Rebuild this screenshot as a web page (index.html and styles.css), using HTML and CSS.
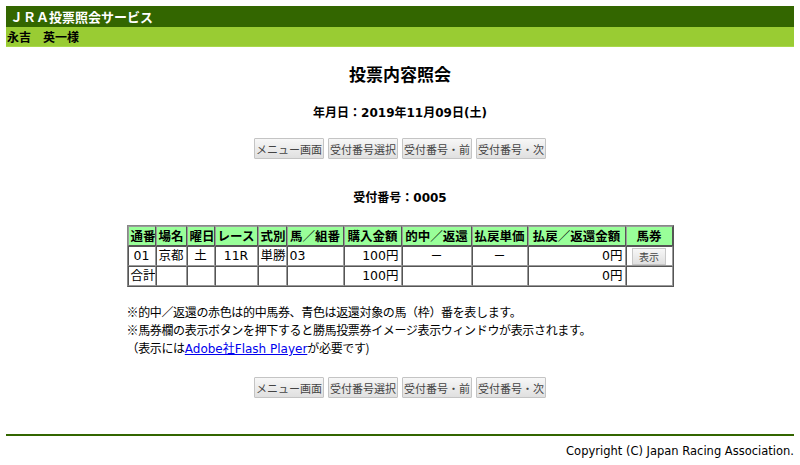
FILE: index.html
```html
<!DOCTYPE html>
<html lang="ja">
<head>
<meta charset="utf-8">
<title>投票内容照会</title>
<link rel="stylesheet" href="styles.css">
</head>
<body>
<div class="site-title">ＪＲＡ投票照会サービス</div>
<div class="user-bar">永吉　英一様</div>

<div class="main">
  <h1 class="page-title">投票内容照会</h1>
  <p class="date">年月日：2019年11月09日(土)</p>

  <div class="btn-row">
    <button class="btn">メニュー画面</button>
    <button class="btn">受付番号選択</button>
    <button class="btn">受付番号・前</button>
    <button class="btn">受付番号・次</button>
  </div>

  <p class="receipt">受付番号：0005</p>

  <div class="content">
    <table class="result">
      <thead>
        <tr>
          <th class="c1">通番</th>
          <th class="c2">場名</th>
          <th class="c3">曜日</th>
          <th class="c4">レース</th>
          <th class="c5">式別</th>
          <th class="c6">馬／組番</th>
          <th class="c7">購入金額</th>
          <th class="c8">的中／返還</th>
          <th class="c9">払戻単価</th>
          <th class="c10">払戻／返還金額</th>
          <th class="c11">馬券</th>
        </tr>
      </thead>
      <tbody>
        <tr>
          <td class="center">01</td>
          <td>京都</td>
          <td class="center">土</td>
          <td class="center">11R</td>
          <td>単勝</td>
          <td>03</td>
          <td class="right">100円</td>
          <td class="center">－</td>
          <td class="center">－</td>
          <td class="right">0円</td>
          <td class="center"><button class="btn-small">表示</button></td>
        </tr>
        <tr>
          <td>合計</td>
          <td></td>
          <td></td>
          <td></td>
          <td></td>
          <td></td>
          <td class="right">100円</td>
          <td></td>
          <td></td>
          <td class="right">0円</td>
          <td></td>
        </tr>
      </tbody>
    </table>

    <div class="notes">
      <p>※的中／返還の赤色は的中馬券、青色は返還対象の馬（枠）番を表します。</p>
      <p>※馬券欄の表示ボタンを押下すると勝馬投票券イメージ表示ウィンドウが表示されます。</p>
      <p>（表示には<a class="link" href="#">Adobe社Flash Player</a>が必要です)</p>
    </div>
  </div>

  <div class="btn-row bottom">
    <button class="btn">メニュー画面</button>
    <button class="btn">受付番号選択</button>
    <button class="btn">受付番号・前</button>
    <button class="btn">受付番号・次</button>
  </div>
</div>

<footer class="footer">Copyright (C) Japan Racing Association.</footer>
</body>
</html>
```

FILE: styles.css
```css
html, body {
  background: #ffffff;
}
body {
  margin: 6px;
  font-family: "DejaVu Sans", "Noto Sans CJK JP", sans-serif;
  font-size: 12px;
  color: #000000;
}
.site-title {
  background: #336600;
  color: #ffffff;
  font-family: "Noto Sans CJK JP", sans-serif;
  font-weight: bold;
  font-size: 13px;
  height: 21px;
  line-height: 21px;
  padding-left: 4px;
}
.user-bar {
  background: #99cc33;
  font-family: "Noto Sans CJK JP", sans-serif;
  font-weight: bold;
  font-size: 12px;
  height: 19px;
  line-height: 19px;
  padding-left: 1px;
  border-bottom: 1px solid #a8d84a;
}
.main {
  display: flex;
  flex-direction: column;
  align-items: center;
}
.page-title {
  margin: 14px 0 0;
  font-family: "Noto Sans CJK JP", sans-serif;
  font-size: 17px;
  font-weight: bold;
  line-height: 26px;
}
.date {
  margin: 17px 0 0;
  font-family: "DejaVu Sans", "Noto Sans CJK JP", sans-serif;
  font-size: 12px;
  font-weight: bold;
  line-height: 18px;
}
.btn-row {
  display: flex;
  gap: 4px;
  margin-top: 16px;
}
.btn {
  width: 70px;
  height: 21px;
  padding: 0;
  font-family: "Noto Sans CJK JP", sans-serif;
  font-size: 11px;
  color: #444444;
  background: linear-gradient(#f7f7f7, #e0e0e0);
  border: 1px solid #c4c4c4;
  border-radius: 1px;
}
.receipt {
  margin: 30px 0 0;
  font-weight: bold;
  font-size: 12px;
  line-height: 18px;
}
.content {
  width: 547px;
  margin-top: 18px;
}
.result {
  border-collapse: separate;
  border-spacing: 0;
  border: 1px solid #888888;
  border-right-color: #555555;
  border-bottom-color: #555555;
  width: 547px;
  table-layout: fixed;
  font-family: "Noto Sans CJK JP", sans-serif;
  font-size: 12.5px;
}
.result th,
.result td {
  border: 1px solid #9a9a9a;
  border-right-color: #555555;
  border-bottom-color: #555555;
  padding: 0 2px;
  height: 18px;
  line-height: 18px;
  white-space: nowrap;
  overflow: hidden;
}
.result td {
  border-color: #555555 #9a9a9a #9a9a9a #555555;
  font-family: "DejaVu Sans", "Noto Sans CJK JP", sans-serif;
  font-size: 12.5px;
}
.result th {
  background: #99ff99;
  font-weight: bold;
  text-align: center;
}
.c1 { width: 22px; }
.c2 { width: 25px; }
.c3 { width: 22px; }
.c4 { width: 37px; }
.c5 { width: 23px; }
.c6 { width: 51px; }
.c7 { width: 52px; }
.c8 { width: 64px; }
.c9 { width: 50px; }
.c10 { width: 92px; }
.c11 { width: 41px; }
.center { text-align: center; }
.right { text-align: right; }
.btn-small {
  width: 34px;
  height: 17px;
  padding: 0;
  font-family: "Noto Sans CJK JP", sans-serif;
  font-size: 10px;
  color: #444444;
  background: linear-gradient(#f7f7f7, #e0e0e0);
  border: 1px solid #c8c8c8;
  vertical-align: middle;
}
.notes {
  margin-top: 16px;
  font-family: "Noto Sans CJK JP", sans-serif;
  font-size: 12px;
  letter-spacing: -0.35px;
}
.notes p {
  margin: 0;
  line-height: 18px;
}
.link {
  font-family: "DejaVu Sans", "Noto Sans CJK JP", sans-serif;
  font-size: 12px;
  letter-spacing: 0;
  color: #0000ee;
  text-decoration: underline;
}
.btn-row.bottom {
  margin-top: 19px;
}
.footer {
  margin-top: 36px;
  border-top: 2px solid #336600;
  padding-top: 6px;
  text-align: right;
  font-family: "DejaVu Sans", sans-serif;
  font-size: 11.5px;
  line-height: 18px;
}
```
